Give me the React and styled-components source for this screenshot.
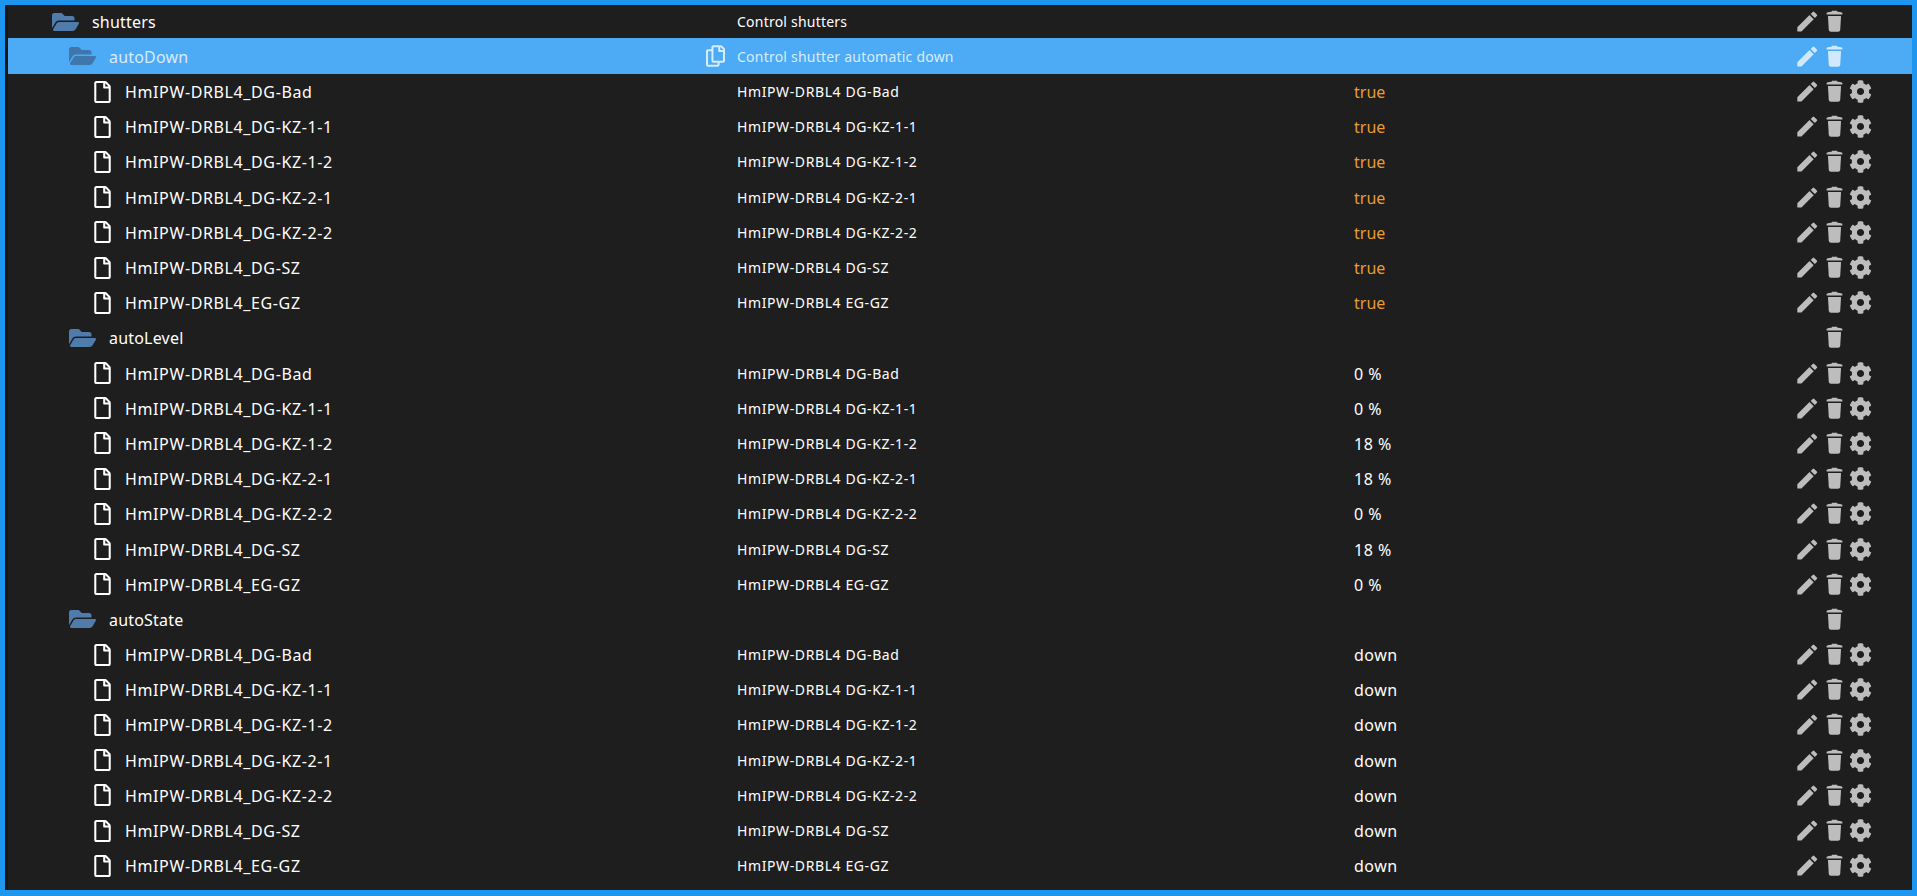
import React from "react";
import styled, { createGlobalStyle } from "styled-components";
import { FaFolderOpen, FaRegFile, FaRegCopy, FaCog } from "react-icons/fa";
import { MdEdit } from "react-icons/md";

const devices = [
  ["HmIPW-DRBL4_DG-Bad", "HmIPW-DRBL4 DG-Bad"],
  ["HmIPW-DRBL4_DG-KZ-1-1", "HmIPW-DRBL4 DG-KZ-1-1"],
  ["HmIPW-DRBL4_DG-KZ-1-2", "HmIPW-DRBL4 DG-KZ-1-2"],
  ["HmIPW-DRBL4_DG-KZ-2-1", "HmIPW-DRBL4 DG-KZ-2-1"],
  ["HmIPW-DRBL4_DG-KZ-2-2", "HmIPW-DRBL4 DG-KZ-2-2"],
  ["HmIPW-DRBL4_DG-SZ", "HmIPW-DRBL4 DG-SZ"],
  ["HmIPW-DRBL4_EG-GZ", "HmIPW-DRBL4 EG-GZ"],
];

const levels = ["0 %", "0 %", "18 %", "18 %", "0 %", "18 %", "0 %"];

// lid with a handle, body a bit narrower towards the bottom
const TrashSvg = ({ className }) => (
  <svg className={className} viewBox="0 0 24 24" fill="currentColor">
    <path d="M5 4.2c1.3-.5 2.8-.8 4.3-.9l.6-.9h4.2l.6.9c1.5.1 3 .4 4.3.9v1.6H5z" />
    <path d="M6.2 7.2h11.6l-.7 12.2c-.1 1-.9 1.8-1.9 1.8H8.8c-1 0-1.8-.8-1.9-1.8z" />
  </svg>
);

export default function App() {
  return (
    <>
      <GlobalStyle />
      <Frame>
        <FolderRow name="shutters" desc="Control shutters" level={0} first edit />
        <FolderRow name="autoDown" desc="Control shutter automatic down" level={1} selected edit />
        {devices.map(([name, desc]) => (
          <FileRow key={name} name={name} desc={desc} value="true" orange />
        ))}
        <FolderRow name="autoLevel" level={1} />
        {devices.map(([name, desc], i) => (
          <FileRow key={name} name={name} desc={desc} value={levels[i]} />
        ))}
        <FolderRow name="autoState" level={1} />
        {devices.map(([name, desc]) => (
          <FileRow key={name} name={name} desc={desc} value="down" />
        ))}
      </Frame>
    </>
  );
}

const FolderRow = ({ name, desc, level, selected, first, edit }) => (
  <Row $selected={selected} $first={first}>
    <NameCell>
      <FolderIcon $level={level} $selected={selected} />
      <FolderName $level={level}>{name}</FolderName>
      {selected && <CopyIcon />}
    </NameCell>
    <DescCell>{desc}</DescCell>
    <ValueCell />
    <Actions $selected={selected}>
      <ActionSlot>{edit && <EditIcon />}</ActionSlot>
      <TrashIcon />
    </Actions>
  </Row>
);

const FileRow = ({ name, desc, value, orange }) => (
  <Row>
    <NameCell>
      <FileIcon />
      <FileName>{name}</FileName>
    </NameCell>
    <DescCell $device>{desc}</DescCell>
    <ValueCell $orange={orange}>{value}</ValueCell>
    <Actions>
      <ActionSlot>
        <EditIcon />
      </ActionSlot>
      <TrashIcon />
      <GearIcon />
    </Actions>
  </Row>
);

const GlobalStyle = createGlobalStyle`
  html, body {
    margin: 0;
    height: 100%;
    background: #2196f3;
    overflow: hidden;
  }
`;

const Frame = styled.div`
  box-sizing: border-box;
  width: 1917px;
  height: 896px;
  border: 5px solid #1e96ef;
  border-bottom-width: 6px;
  padding: 0 0 0 3px;
  background: #1e1e1e;
  box-shadow: inset 3px 0 0 #171717;
  font-family: "Noto Sans", "Open Sans", sans-serif;
  color: #fff;
`;

const Row = styled.div`
  display: grid;
  grid-template-columns: 729px 617px 433px 1fr;
  align-items: center;
  height: ${(p) => (p.$first ? "33px" : p.$selected ? "36px" : "35.2px")};
  background: ${(p) => (p.$selected ? "#4dabf5" : "transparent")};
  color: ${(p) => (p.$selected ? "#d6ecff" : "#fff")};
`;

const NameCell = styled.div`
  display: flex;
  align-items: center;
  min-width: 0;
`;

const FolderIcon = styled(FaFolderOpen)`
  width: 27px;
  height: 24px;
  margin-left: ${(p) => (p.$level ? "61px" : "44px")};
  color: ${(p) => (p.$selected ? "#3f77ad" : "#4f7cab")};
  flex-shrink: 0;
`;

const FolderName = styled.span`
  margin-left: 13px;
  padding-top: 1px;
  font-size: 16px;
  letter-spacing: 0.2px;
`;

const FileIcon = styled(FaRegFile)`
  width: 17px;
  height: 22px;
  margin-left: 86px;
  flex-shrink: 0;
`;

const FileName = styled.span`
  margin-left: 14px;
  padding-top: 1px;
  font-size: 16px;
  letter-spacing: 0.62px;
`;

const CopyIcon = styled(FaRegCopy)`
  width: 19px;
  height: 22px;
  margin-left: auto;
  margin-right: 12px;
  flex-shrink: 0;
`;

const DescCell = styled.div`
  font-size: 14px;
  letter-spacing: ${(p) => (p.$device ? "0.6px" : "0.22px")};
`;

const ValueCell = styled.div`
  padding-top: 1px;
  font-size: 16px;
  letter-spacing: ${(p) => (p.$orange ? "0" : "0.5px")};
  color: ${(p) => (p.$orange ? "#e89c30" : "inherit")};
`;

const Actions = styled.div`
  display: flex;
  align-items: center;
  color: ${(p) => (p.$selected ? "#d0e9ff" : "#bdbdbd")};
`;

const ActionSlot = styled.span`
  display: inline-flex;
  width: 26.5px;
  height: 27px;
  margin-left: 7px;
`;

const EditIcon = styled(MdEdit)`
  width: 27px;
  height: 27px;
`;

const TrashIcon = styled(TrashSvg)`
  width: 27px;
  height: 27px;
  flex-shrink: 0;
`;

const GearIcon = styled(FaCog)`
  width: 23px;
  height: 23px;
  margin-left: 1px;
  flex-shrink: 0;
`;
